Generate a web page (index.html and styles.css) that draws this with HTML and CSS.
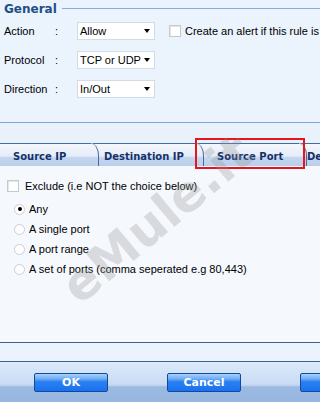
FILE: index.html
```html
<!DOCTYPE html>
<html lang="en">
<head>
  <meta charset="UTF-8">
  <title>Rule - Source Port</title>
  <link rel="stylesheet" href="styles.css">
</head>
<body>

  <div class="dialog">

    <section class="general">
      <div class="legend">
        <span class="legend-title">General</span>
        <span class="legend-line"></span>
      </div>

      <div class="field-row">
        <span class="field-label">Action</span>
        <span class="colon">:</span>
        <div class="combo"><span>Allow</span><i class="arrow"></i></div>
        <label class="check alert-check"><span class="box"></span>Create an alert if this rule is fired</label>
      </div>
      <div class="field-row">
        <span class="field-label">Protocol</span>
        <span class="colon">:</span>
        <div class="combo"><span>TCP or UDP</span><i class="arrow"></i></div>
      </div>
      <div class="field-row">
        <span class="field-label">Direction</span>
        <span class="colon">:</span>
        <div class="combo"><span>In/Out</span><i class="arrow"></i></div>
      </div>
    </section>

    <div class="band"></div>

    <div class="tabs">
      <div class="tab tab-first">Source IP</div>
      <div class="tab tab-dest">Destination IP</div>
      <div class="tab tab-port">Source Port</div>
      <div class="tab tab-last">De</div>
      <div class="highlight"></div>
    </div>

    <div class="panel">
      <label class="check exclude"><span class="box"></span>Exclude (i.e NOT the choice below)</label>

      <div class="radios">
        <label class="radio"><span class="dot checked"></span>Any</label>
        <label class="radio"><span class="dot"></span>A single port</label>
        <label class="radio"><span class="dot"></span>A port range</label>
        <label class="radio"><span class="dot"></span>A set of ports (comma seperated e.g 80,443)</label>
      </div>
    </div>

    <div class="strip"></div>

    <div class="footer">
      <button class="btn">OK</button>
      <button class="btn">Cancel</button>
      <button class="btn" aria-label="Help"></button>
    </div>

    <div class="watermark">eMule.it</div>
  </div>

</body>
</html>
```

FILE: styles.css
```css
* {
  box-sizing: border-box;
}

body {
  margin: 0;
  font-family: 'Liberation Sans', Arial, sans-serif;
  font-size: 11px;
  color: #000;
  background: #f5f8fd;
  overflow: hidden;
}

.dialog {
  position: relative;
  width: 320px;
  height: 402px;
  overflow: hidden;
  display: flex;
  flex-direction: column;
}

/* General block */
.general {
  height: 123px;
  background: #ebf3fd;
  border-bottom: 1px solid #7fa6d6;
  padding: 2px 0 0 4px;
}

.legend {
  display: flex;
  align-items: center;
  gap: 5px;
  height: 13px;
  margin-bottom: 7px;
}

.legend-title {
  font-family: 'DejaVu Sans', Verdana, sans-serif;
  font-weight: bold;
  font-size: 12px;
  color: #1f4f86;
}

.legend-line {
  flex: 1;
  height: 1px;
  background: #86acdb;
}

.field-row {
  display: flex;
  align-items: center;
  height: 18px;
  margin-bottom: 11px;
  white-space: nowrap;
}

.field-label {
  width: 51px;
  flex: none;
}

.colon {
  width: 22px;
  flex: none;
}

.combo {
  width: 78px;
  height: 18px;
  flex: none;
  background: #fff;
  border: 1px solid #d3dbe5;
  display: flex;
  align-items: center;
  justify-content: space-between;
  padding: 0 4px 0 2px;
  font-size: 11px;
}

.arrow {
  width: 0;
  height: 0;
  border-left: 3.5px solid transparent;
  border-right: 3.5px solid transparent;
  border-top: 4px solid #000;
}

.check {
  display: flex;
  align-items: center;
  gap: 4px;
  white-space: nowrap;
  font-size: 11px;
}

.box {
  width: 12px;
  height: 12px;
  background: #fff;
  border: 1px solid #c4cad2;
  box-shadow: inset 1px 1px 0 #e4e7ea;
  flex: none;
}

.alert-check {
  margin-left: 14px;
}

/* Band and tabs */
.band {
  height: 21px;
  background: #e9f1fb;
  border-bottom: 1px solid #3f6ca8;
}

.tabs {
  position: relative;
  height: 22px;
  display: flex;
  background: linear-gradient(#f4f7fc 0%, #e4edf8 55%, #c3d6ef 62%, #b9cfec 100%);
  font-family: 'DejaVu Sans', Verdana, sans-serif;
  font-weight: bold;
  font-size: 10px;
  color: #17306a;
}

.tab {
  position: relative;
  flex: none;
  display: flex;
  align-items: center;
  padding-top: 2px;
  white-space: nowrap;
}

.tab-first {
  width: 92px;
  padding-left: 13px;
}

.tab-dest {
  width: 105px;
  padding-left: 12px;
}

.tab-port {
  width: 103px;
  padding-left: 20px;
}

.tab-last {
  padding-left: 7px;
}

.tab-first::after,
.tab-dest::after,
.tab-port::after {
  content: "";
  position: absolute;
  right: -7px;
  top: -1px;
  width: 7px;
  height: 22px;
  border-top: 1px solid #9fb5d2;
  border-right: 1px solid #476a99;
  border-top-right-radius: 9px 14px;
}

.highlight {
  position: absolute;
  left: 195px;
  top: -6px;
  width: 110px;
  height: 31px;
  border: 2px solid #e8141b;
}

/* Panel */
.panel {
  flex: 1;
  background: #f5f8fd;
  padding: 14px 0 0 7px;
}

.exclude {
  gap: 6px;
}

.radios {
  display: flex;
  flex-direction: column;
  gap: 8px;
  margin-top: 11px;
  padding-left: 7px;
}

.radio {
  display: flex;
  align-items: center;
  gap: 4px;
  height: 12px;
  white-space: nowrap;
  font-size: 11px;
}

.dot {
  width: 11px;
  height: 11px;
  border-radius: 50%;
  background: #fff;
  border: 1px solid #c9ced5;
  display: flex;
  align-items: center;
  justify-content: center;
  flex: none;
}

.dot.checked::after {
  content: "";
  width: 4px;
  height: 4px;
  border-radius: 50%;
  background: #000;
}

/* Bottom */
.strip {
  height: 20px;
  background: #ebf3fd;
  border-top: 1px solid #3d6393;
  border-bottom: 1px solid #3d6393;
}

.footer {
  height: 40px;
  display: flex;
  align-items: flex-start;
  gap: 59px;
  padding: 11px 0 0 34px;
  background: linear-gradient(#dbe9fa 0%, #cadcf4 55%, #b7cdea 60%, #9bb9e1 62%, #98b7e0 100%);
}

.btn {
  width: 74px;
  height: 19px;
  flex: none;
  border: 1px solid #0f4b98;
  border-radius: 2px;
  background: linear-gradient(#a9d0fb 0%, #6aaaf4 30%, #2a80f1 45%, #1b71ef 100%);
  color: #fff;
  font-family: 'DejaVu Sans', Verdana, sans-serif;
  font-weight: bold;
  font-size: 11px;
  padding: 0;
}

/* Watermark overlay */
.watermark {
  position: absolute;
  left: 42px;
  top: 190px;
  font-family: 'DejaVu Sans', Verdana, sans-serif;
  font-weight: bold;
  font-size: 50px;
  color: rgba(150, 150, 150, 0.3);
  transform: rotate(-40deg);
  transform-origin: 50% 50%;
  pointer-events: none;
  white-space: nowrap;
}
```
